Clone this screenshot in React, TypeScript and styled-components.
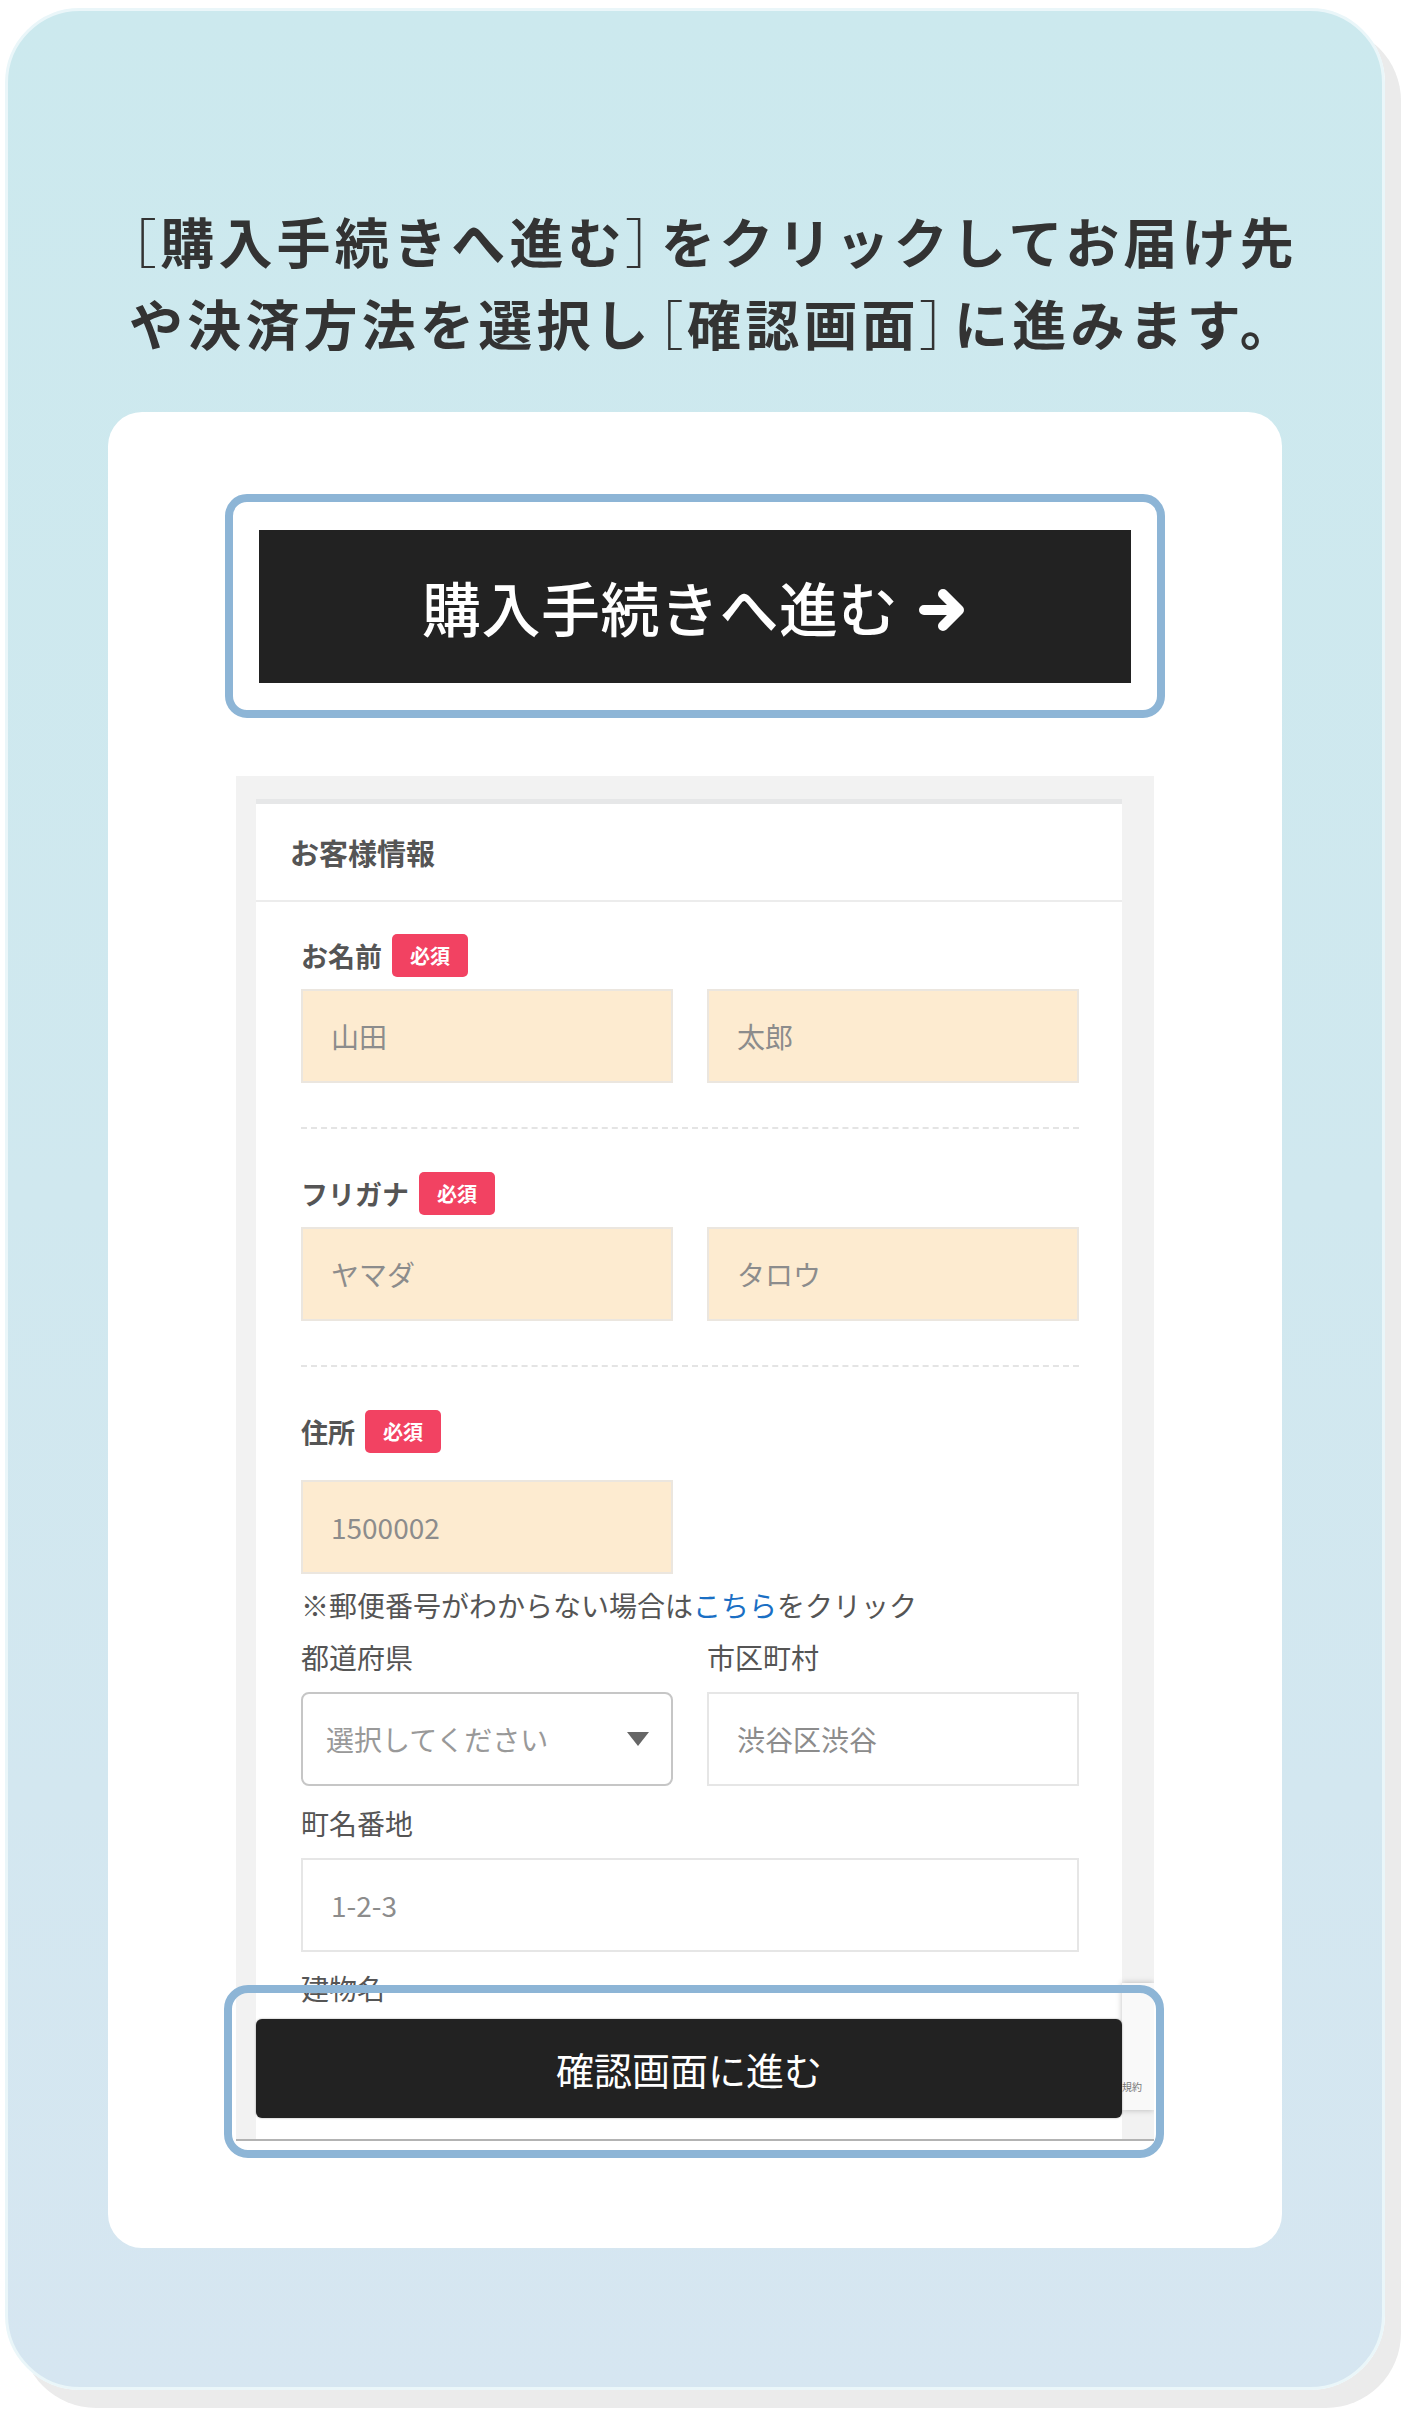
import React from 'react'
import styled, { createGlobalStyle } from 'styled-components'

const GlobalStyle = createGlobalStyle`
  body {
    margin: 0;
    background: #fff;
    font-family: "Noto Sans CJK JP", "Noto Sans", sans-serif;
  }
`

const Page = styled.div`
  width: 1402px;
  height: 2411px;
  padding: 8px 0 0 5px;
  box-sizing: border-box;
`

const Card = styled.div`
  width: 1380px;
  height: 2382px;
  box-sizing: border-box;
  border-radius: 75px;
  border: 3px solid #eaf6f9;
  background: linear-gradient(to bottom, #cce9ee 0%, #d0e8ef 50%, #d6e6f1 100%);
  box-shadow: 16px 18px 0 #ebebeb;
  display: flex;
  flex-direction: column;
  align-items: center;
  padding-top: 189px;
`

const Heading = styled.h2`
  align-self: stretch;
  margin: 0;
  padding-left: 121px;
  font-size: 54px;
  line-height: 82px;
  font-weight: 700;
  letter-spacing: 4.2px;
  color: #333;
  white-space: nowrap;
`

const Bracket = styled.span<{ $open?: boolean; $gap?: number }>`
  font-weight: 300;
  font-feature-settings: "palt";
  ${(p) => (p.$open ? 'margin-left' : 'margin-right')}: ${(p) => p.$gap ?? 0}px;
`

const Panel = styled.div`
  margin-top: 48px;
  width: 1174px;
  height: 1836px;
  box-sizing: border-box;
  background: #fff;
  border-radius: 34px;
  padding-top: 82px;
  display: flex;
  flex-direction: column;
  align-items: center;
`

const Highlight = styled.div`
  width: 940px;
  box-sizing: border-box;
  border: 8px solid #8db5d6;
  border-radius: 22px;
  padding: 28px 26px 27px;
`

const BigButton = styled.div`
  height: 153px;
  background: #222;
  color: #fff;
  display: flex;
  align-items: center;
  justify-content: center;
  gap: 20px;
  font-size: 59px;
  font-weight: 500;
  letter-spacing: 0.5px;

  svg {
    margin-top: 6px;
  }
`

const PhoneWrap = styled.div`
  position: relative;
  margin-top: 58px;
  width: 918px;
`

const Phone = styled.div`
  position: relative;
  height: 1365px;
  box-sizing: border-box;
  background: #f2f2f2;
  border-bottom: 2px solid #b3b3b3;
  overflow: hidden;
  padding: 23px 32px 0 20px;
`

const FormCard = styled.div`
  background: #fff;
  border-top: 5px solid #e6e7e8;
  min-height: 1500px;
`

const FormHeader = styled.div`
  height: 98px;
  box-sizing: border-box;
  border-bottom: 2px solid #ececec;
  display: flex;
  align-items: center;
  padding-left: 34px;
  font-size: 29px;
  font-weight: 700;
  color: #555;
`

const FormBody = styled.div`
  padding: 32px 43px 0 45px;
`

const LabelRow = styled.div`
  height: 43px;
  display: flex;
  align-items: center;
  gap: 10px;
  font-size: 27px;
  font-weight: 700;
  color: #555;
`

const Badge = styled.span`
  width: 76px;
  height: 43px;
  border-radius: 5px;
  background: #f24262;
  color: #fff;
  font-size: 20px;
  font-weight: 700;
  display: flex;
  align-items: center;
  justify-content: center;
`

const Pair = styled.div<{ $top: number }>`
  margin-top: ${(p) => p.$top}px;
  display: grid;
  grid-template-columns: 372px 372px;
  column-gap: 34px;
`

const Field = styled.div<{ $required?: boolean; $top?: number; $wide?: boolean }>`
  margin-top: ${(p) => p.$top ?? 0}px;
  width: ${(p) => (p.$wide ? '778px' : '372px')};
  height: 94px;
  box-sizing: border-box;
  background: ${(p) => (p.$required ? '#fdebd0' : '#fff')};
  border: 2px solid ${(p) => (p.$required ? '#ebe6df' : '#e6e6e6')};
  display: flex;
  align-items: center;
  padding-left: 28px;
  font-size: 28px;
  color: #8c8c8c;
`

const Select = styled.div`
  height: 94px;
  box-sizing: border-box;
  border: 2px solid #c6c6c6;
  border-radius: 8px;
  display: flex;
  align-items: center;
  justify-content: space-between;
  padding: 0 22px 0 23px;
  font-size: 28px;
  color: #999;
`

const Caret = styled.span`
  width: 0;
  height: 0;
  border-left: 11px solid transparent;
  border-right: 11px solid transparent;
  border-top: 14px solid #666;
`

const Divider = styled.hr`
  margin: 44px 0 43px;
  border: none;
  border-top: 2px dashed #e4e4e4;
`

const Note = styled.p<{ $top: number }>`
  margin: ${(p) => p.$top}px 0 0;
  line-height: 40px;
  font-size: 28px;
  color: #555;
  white-space: nowrap;
`

const Link = styled.span`
  color: #1a6fc4;
`

const FooterButton = styled.div`
  position: absolute;
  left: 20px;
  bottom: 21px;
  width: 866px;
  height: 99px;
  border-radius: 6px;
  background: #222;
  color: #fff;
  font-size: 38px;
  display: flex;
  align-items: center;
  justify-content: center;
  box-shadow: 0 0 2px rgba(0, 0, 0, 0.4);
`

const Recaptcha = styled.div`
  position: absolute;
  right: 0;
  bottom: 29px;
  width: 32px;
  height: 127px;
  background: #f9f9f9;
  box-shadow: 0 0 6px rgba(0, 0, 0, 0.25);
  display: flex;
  align-items: flex-end;
  padding-bottom: 16px;
  box-sizing: border-box;
  font-size: 10px;
  color: #777;
  overflow: hidden;
  white-space: nowrap;
`

const FooterHighlight = styled(Highlight)`
  position: absolute;
  left: -12px;
  top: 1209px;
  height: 173px;
  border-radius: 24px;
  padding: 0;
  pointer-events: none;
`

const Arrow = () => (
  <svg width="50" height="50" viewBox="0 0 50 50" fill="none">
    <path
      d="M6 25 H40 M25 9 L41 25 L25 41"
      stroke="#fff"
      strokeWidth="10"
      strokeLinecap="round"
      strokeLinejoin="round"
    />
  </svg>
)

const App: React.FC = () => {
  return (
    <Page>
      <GlobalStyle />
      <Card>
        <Heading>
          <Bracket $open>［</Bracket>購入手続きへ進む<Bracket $gap={4}>］</Bracket>
          をクリックしてお届け先
          <br />
          や決済方法を選択し<Bracket $open $gap={3}>［</Bracket>確認画面
          <Bracket $gap={3}>］</Bracket>に進みます。
        </Heading>

        <Panel>
          <Highlight>
            <BigButton>
              購入手続きへ進む
              <Arrow />
            </BigButton>
          </Highlight>

          <PhoneWrap>
            <Phone>
              <FormCard>
                <FormHeader>お客様情報</FormHeader>
                <FormBody>
                  <LabelRow>
                    お名前<Badge>必須</Badge>
                  </LabelRow>
                  <Pair $top={12}>
                    <Field $required>山田</Field>
                    <Field $required>太郎</Field>
                  </Pair>
                  <Divider />

                  <LabelRow>
                    フリガナ<Badge>必須</Badge>
                  </LabelRow>
                  <Pair $top={12}>
                    <Field $required>ヤマダ</Field>
                    <Field $required>タロウ</Field>
                  </Pair>
                  <Divider />

                  <LabelRow>
                    住所<Badge>必須</Badge>
                  </LabelRow>
                  <Field $required $top={27}>
                    1500002
                  </Field>
                  <Note $top={11}>
                    ※郵便番号がわからない場合は<Link>こちら</Link>をクリック
                  </Note>
                  <Pair $top={12}>
                    <Note $top={0}>都道府県</Note>
                    <Note $top={0}>市区町村</Note>
                  </Pair>
                  <Pair $top={15}>
                    <Select>
                      選択してください
                      <Caret />
                    </Select>
                    <Field>渋谷区渋谷</Field>
                  </Pair>
                  <Note $top={17}>町名番地</Note>
                  <Field $wide $top={15}>
                    1-2-3
                  </Field>
                  <Note $top={16}>建物名</Note>
                  <Field $wide $top={15} />
                </FormBody>
              </FormCard>

              <Recaptcha>規約</Recaptcha>
              <FooterButton>確認画面に進む</FooterButton>
            </Phone>
            <FooterHighlight />
          </PhoneWrap>
        </Panel>
      </Card>
    </Page>
  )
}

export default App
